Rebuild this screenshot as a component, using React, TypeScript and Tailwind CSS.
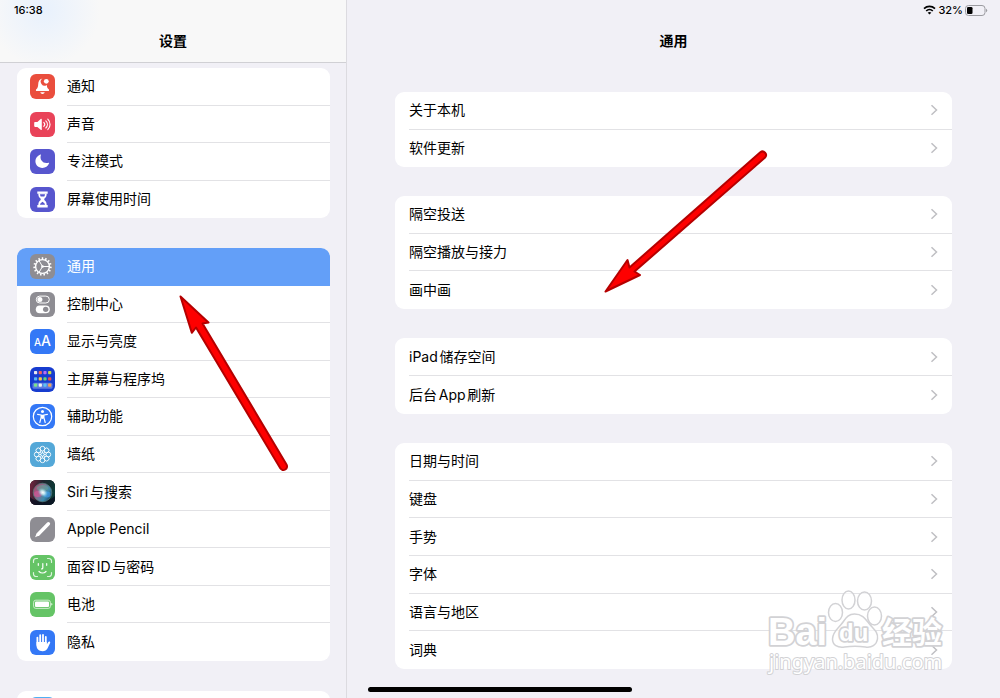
import type { ReactNode } from "react";

type Item = { label: string; tile: string; icon: ReactNode };

const PETALS = [0, 45, 90, 135, 180, 225, 270, 315];
const TEETH = [0, 24, 48, 72, 96, 120, 144, 168, 192, 216, 240, 264, 288, 312, 336];

const APP_DOTS = [
  ["#e8e8ee", "#f2605c", "#b66ef0", "#c5dc4a"],
  ["#55b6f5", "#f5c945", "#5fd47c", "#f0524c"],
  ["#7be389", "#f4f4f8", "#5cc4f2", "#f0a45c"],
];

const bell = (
  <>
    <path
      fill="#fff"
      d="M12.4 4.6c-3 .6-4.1 2.9-4.2 5.6-.1 2.700-.6 3.900-1.900 5-.7.700-.5 1.900.6 1.900h11.200c1.100 0 1.300-1.200.6-1.900-1.200-1-1.700-2-1.900-4.300A3.600 3.600 0 0 1 12.400 4.600Z"
    />
    <circle cx="16.3" cy="7.300" r="2.400" fill="#fff" />
    <path fill="#fff" d="M10.300 18.300h4.400c-.3 1-1.200 1.700-2.200 1.700s-1.900-.7-2.200-1.700Z" />
  </>
);

const speaker = (
  <>
    <path fill="#fff" d="M4.200 10.700c0-.5.300-.8.800-.8h2.400l3.300-2.900c.5-.4 1.100-.2 1.100.4v10c0 .7-.6.900-1.100.4l-3.300-2.900H5c-.5 0-.8-.3-.8-.8v-3.400Z" />
    <g fill="none" stroke="#fff" strokeWidth="1.1" strokeLinecap="round">
      <path d="M13.800 10.400c1.100 1.100 1.100 2.900 0 4" />
      <path d="M15.800 8.800c2.100 2.100 2.100 5.100 0 7.200" />
      <path d="M17.800 7.200c3 3 3 7.400 0 10.400" />
    </g>
  </>
);

const moon = (
  <path
    fill="#fff"
    d="M10.300 5.500c.5-.3.800 0 .6.500-1.700 5 2.600 9.300 7.600 7.700.5-.2.800.1.600.6-1.100 2.800-3.700 4.700-6.700 4.700-4.100 0-7-3-7-6.900 0-2.900 1.900-5.400 4.900-6.600Z"
  />
);

const hourglass = (
  <>
    <path fill="#fff" d="M7.300 4.400h10.400v2.300H7.300zM7.300 18.100h10.400v2.300H7.300z" />
    <path
      fill="#fff"
      d="M8.300 6.500h8.400c0 2.700-.8 4-2.400 5.200v1.400c1.600 1.200 2.400 2.500 2.400 5.200H8.300c0-2.700.8-4 2.400-5.200v-1.400C9.100 10.500 8.300 9.200 8.300 6.500Z"
    />
    <path fill="#5756ce" d="M10 7.200h5c-.1 1-.3 1.600-.7 2.200h-3.600c-.4-.6-.6-1.200-.7-2.200ZM10 17.700c.2-1.500 1.300-2 2.500-3 1.200 1 2.300 1.500 2.500 3z" />
  </>
);

const gear = (
  <>
    <g stroke="#fff" strokeWidth="1.500">
      {TEETH.map((deg) => (
        <path key={deg} d="M12.500 3.300v2.200" transform={`rotate(${deg} 12.500 12.500)`} />
      ))}
    </g>
    <circle cx="12.5" cy="12.5" r="6.900" fill="none" stroke="#fff" strokeWidth="1.4" />
    <path d="M12.500 12.500h6.500M12.500 12.500 9.200 6.900M12.500 12.500l-3.300 5.600" stroke="#fff" />
    <circle cx="12.5" cy="12.5" r="1.3" fill="#fff" />
  </>
);

const toggles = (
  <>
    <rect x="6.3" y="4.1" width="13" height="6.9" rx="3.45" fill="none" stroke="#fff" />
    <circle cx="9.9" cy="7.55" r="2.5" fill="#fff" />
    <rect x="5.8" y="13.4" width="14" height="7.9" rx="3.95" fill="#fff" />
    <circle cx="15.7" cy="17.35" r="2.7" fill="#8e8d93" />
  </>
);

const letters = (
  <g fill="#fff" fontFamily="Inter, sans-serif" fontWeight="500">
    <text x="4" y="17" fontSize="10">A</text>
    <text x="11" y="17" fontSize="14">A</text>
  </g>
);

const homeScreen = (
  <>
    <rect x="2.5" y="15.8" width="20" height="6" rx="1.5" fill="#5e7ce0" />
    {APP_DOTS.map((row, y) =>
      row.map((color, x) => (
        <rect key={`${x}-${y}`} x={4 + x * 4.7} y={4 + y * 6.3} width="3.2" height="3.2" rx="0.8" fill={color} />
      )),
    )}
  </>
);

const accessibility = (
  <>
    <circle cx="12.5" cy="12.5" r="9.2" fill="none" stroke="#fff" strokeWidth="1.2" />
    <circle cx="12.5" cy="7.6" r="1.5" fill="#fff" />
    <path
      d="M7.600 10.300l3.500.7v2.700l-1.300 4.800M17.400 10.300l-3.500.7v2.700l1.300 4.800"
      fill="none"
      stroke="#fff"
      strokeWidth="1.2"
      strokeLinecap="round"
      strokeLinejoin="round"
    />
    <path fill="#fff" d="M11 10.700h3v3.600l-1.500.8-1.500-.8z" />
  </>
);

const flower = (
  <g fill="none" stroke="#fff" strokeWidth="0.9">
    {PETALS.map((deg) => (
      <g key={deg} transform={`rotate(${deg} 12.500 12.500)`}>
        <circle cx="12.5" cy="6.7" r="2.4" />
        <path d="M12.500 9.300v1.600" />
      </g>
    ))}
    <circle cx="12.5" cy="12.5" r="1.7" />
  </g>
);

const siri = (
  <>
    <defs>
      <linearGradient id="siri-bg" x1="0" y1="0" x2="1" y2="0.2">
        <stop offset="0" stopColor="#7c2440" />
        <stop offset="0.5" stopColor="#20242f" />
        <stop offset="1" stopColor="#0c3a36" />
      </linearGradient>
      <linearGradient id="siri-orb" x1="0" y1="0.2" x2="1" y2="0.8">
        <stop offset="0" stopColor="#b8406c" />
        <stop offset="0.4" stopColor="#80708e" />
        <stop offset="0.7" stopColor="#3d8cae" />
        <stop offset="1" stopColor="#1c3c64" />
      </linearGradient>
      <radialGradient id="siri-glow">
        <stop offset="0" stopColor="#fff" />
        <stop offset="0.4" stopColor="#d4f4f8" stopOpacity="0.8" />
        <stop offset="1" stopColor="#76c8d8" stopOpacity="0" />
      </radialGradient>
    </defs>
    <rect width="25" height="25" fill="url(#siri-bg)" />
    <path d="M0 17c6 6 18 6 25-1v9H0z" fill="#0b0f20" opacity="0.8" />
    <circle cx="12.5" cy="12.5" r="9.3" fill="url(#siri-orb)" stroke="#57817f" strokeWidth="0.7" />
    <ellipse cx="12.5" cy="8" rx="6" ry="3" fill="#5fae9c" opacity="0.5" />
    <ellipse cx="8" cy="14" rx="4" ry="3" fill="#e0539a" opacity="0.6" />
    <ellipse cx="17" cy="14.5" rx="3.5" ry="3" fill="#429bea" opacity="0.7" />
    <ellipse cx="12.8" cy="12.3" rx="5.5" ry="4.2" fill="url(#siri-glow)" transform="rotate(35 12.500 12.500)" />
  </>
);

const pencil = (
  <>
    <path d="M8.200 17.200 18.400 6.800" stroke="#fff" strokeWidth="3.4" strokeLinecap="round" />
    <path fill="#fff" d="M6.800 16.200 5 20.200l4.200-1.700z" />
  </>
);

const faceId = (
  <g fill="none" stroke="#fff" strokeWidth="1.2" strokeLinecap="round">
    <path
      stroke="#dcf3dc"
      d="M3.500 7.500V6A2.500 2.500 0 0 1 6 3.500h1.500M17.500 3.500H19A2.500 2.500 0 0 1 21.500 6v1.500M21.500 17.500V19a2.500 2.500 0 0 1-2.500 2.500h-1.500M7.500 21.500H6A2.500 2.500 0 0 1 3.500 19v-1.500"
    />
    <path d="M8.300 8.600v1.700M16.700 8.600v1.700M12.800 8.600v4.300c0 .7-.4 1-1.200 1M9 16.500c2 2 5 2 7 0" />
  </g>
);

const batteryFull = (
  <>
    <rect x="3.6" y="8.2" width="16.800" height="8.2" rx="2.2" fill="none" stroke="#d8f1d7" strokeWidth="0.9" />
    <rect x="5" y="9.6" width="14" height="5.4" rx="1" fill="#fff" />
    <path fill="#fff" d="M21.400 11v2.600c.7-.2 1-.7 1-1.300s-.3-1.100-1-1.300Z" />
  </>
);

const hand = (
  <>
    <g stroke="#fff" strokeWidth="1.8" strokeLinecap="round">
      <path d="M7.400 7.600V15M10.200 5.200V15M13 5V15M15.800 7V15" />
    </g>
    <path
      fill="#fff"
      d="M6.500 12h10.200v2.500l1.400-2.200c.4-.7 1.100-1 1.700-.7.500.3.600.9.300 1.500l-2.500 5.200c-1 1.900-2.700 2.900-5.100 2.900-3.700 0-6-2.300-6-5.900z"
    />
  </>
);

const TOP_ITEMS: Item[] = [
  { label: "通知", tile: "bg-[#ea4e3d]", icon: bell },
  { label: "声音", tile: "bg-[#e94359]", icon: speaker },
  { label: "专注模式", tile: "bg-[#5756ce]", icon: moon },
  { label: "屏幕使用时间", tile: "bg-[#5756ce]", icon: hourglass },
];

const MAIN_ITEMS: Item[] = [
  { label: "通用", tile: "bg-[#8e8d93]", icon: gear },
  { label: "控制中心", tile: "bg-[#8e8d93]", icon: toggles },
  { label: "显示与亮度", tile: "bg-[#3478f6]", icon: letters },
  { label: "主屏幕与程序坞", tile: "bg-[#173ccf]", icon: homeScreen },
  { label: "辅助功能", tile: "bg-[#3478f6]", icon: accessibility },
  { label: "墙纸", tile: "bg-[#54a8d8]", icon: flower },
  { label: "Siri与搜索", tile: "bg-black", icon: siri },
  { label: "Apple Pencil", tile: "bg-[#8e8d93]", icon: pencil },
  { label: "面容ID与密码", tile: "bg-[#65c466]", icon: faceId },
  { label: "电池", tile: "bg-[#65c466]", icon: batteryFull },
  { label: "隐私", tile: "bg-[#3478f6]", icon: hand },
];

const GENERAL_GROUPS = [
  { height: "min-h-[75px]", rows: ["关于本机", "软件更新"] },
  { height: "min-h-[113px]", rows: ["隔空投送", "隔空播放与接力", "画中画"] },
  { height: "min-h-[76px]", rows: ["iPad储存空间", "后台App刷新"] },
  { height: "min-h-[226px]", rows: ["日期与时间", "键盘", "手势", "字体", "语言与地区", "词典"] },
];

function Tile({ color, children }: { color: string; children?: ReactNode }) {
  return (
    <span className={`size-[25px] shrink-0 overflow-hidden rounded-[6px] ${color}`}>
      <svg viewBox="0 0 25 25" className="size-full" aria-hidden="true">
        {children}
      </svg>
    </span>
  );
}

function SidebarGroup({ items, height, selected }: { items: Item[]; height: string; selected?: string }) {
  return (
    <ul className={`grid auto-rows-fr overflow-hidden rounded-[9px] bg-white ${height}`}>
      {items.map((item, i) => {
        const active = item.label === selected;
        const line = i < items.length - 1 && !active;
        return (
          <li key={item.label} className="grid">
            <a
              href="#"
              aria-current={active ? "page" : undefined}
              className={`flex items-center gap-3 pl-[13px] ${active ? "bg-[#639ff8] text-white" : ""}`}
            >
              <Tile color={item.tile}>{item.icon}</Tile>
              <span className={`flex flex-1 items-center self-stretch border-b ${line ? "border-[#e2e2e5]" : "border-transparent"}`}>
                {item.label}
              </span>
            </a>
          </li>
        );
      })}
    </ul>
  );
}

function Chevron() {
  return (
    <svg viewBox="0 0 8 12" className="h-3 w-2" fill="none" stroke="#bfbfc3" strokeWidth="1.5" aria-hidden="true">
      <path d="M1.500 1.200 6.500 6l-5 4.800" />
    </svg>
  );
}

function StatusIcons() {
  return (
    <div className="flex items-center justify-end gap-[2px] pr-3 text-[11px] leading-5 font-medium">
      <svg viewBox="0 0 13 10" className="h-[10px] w-[13px]" aria-hidden="true">
        <g fill="none" stroke="#000" strokeWidth="1.7">
          <path d="M1 3.700c3.200-3 7.800-3 11 0" />
          <path d="M3.200 6c1.900-1.800 4.700-1.800 6.600 0" />
        </g>
        <path d="M4.700 7.700c1-1 2.600-1 3.600 0L6.500 9.600z" />
      </svg>
      <span>32%</span>
      <svg viewBox="0 0 23 11" className="h-[11px] w-[23px]" aria-hidden="true">
        <rect x="0.5" y="0.5" width="19.5" height="10" rx="3" fill="none" stroke="#9b9ba0" />
        <rect x="2" y="2" width="5.5" height="7" rx="1.3" />
        <path d="M21 3.800v3.400c.8-.3 1.200-.9 1.200-1.700s-.4-1.400-1.200-1.700Z" fill="#9b9ba0" />
      </svg>
    </div>
  );
}

function Watermark() {
  return (
    <svg
      viewBox="0 0 184 90"
      className="pointer-events-none absolute right-[52px] bottom-[20px] h-[90px] w-[184px]"
      fill="#fff"
      stroke="#d2d2d5"
      strokeLinejoin="round"
    >
      <g strokeWidth="1.5" fillOpacity="0.6">
        <ellipse cx="71.5" cy="24.500" rx="7" ry="9" />
        <ellipse cx="84.5" cy="12" rx="6.5" ry="9" />
        <ellipse cx="100.5" cy="13" rx="7" ry="9" />
        <ellipse cx="110.5" cy="28" rx="7" ry="9" />
        <path d="M90.500 26c8 0 11 5 15 10s9 8 8 15c-1 6-6 9-12 8-7-1-14-1-21 0-7 1-12-2-12-8 0-7 5-10 9-15s6-10 13-10Z" />
      </g>
      <g strokeWidth="3.5" paintOrder="stroke" fontFamily="'Liberation Sans', 'Noto Sans CJK SC', sans-serif" fontWeight="700">
        <text x="4" y="57" fontSize="38">Bai</text>
        <text x="75" y="53" fontSize="24">du</text>
        <text x="118" y="55" fontSize="30">经验</text>
      </g>
      <text x="5" y="81" fontSize="20" strokeWidth="2" paintOrder="stroke" fontFamily="'Noto Sans', sans-serif">
        jingyan.baidu.com
      </text>
    </svg>
  );
}

export default function App() {
  return (
    <div className="relative flex h-screen overflow-hidden bg-[#f1f0f6] font-[Inter,'Noto_Sans_CJK_SC',sans-serif] text-sm text-black [text-autospace:normal]">
      <aside className="w-[346px] shrink-0">
        <header className="h-[63px] border-b border-[#d0d0d4] bg-[#f8f8f8] bg-[radial-gradient(circle_at_44px_10px,#e8f1fd_0,#f8f8f8_56px)]">
          <p className="pl-[14px] text-[11px] leading-5 font-medium">16:38</p>
          <h1 className="pt-[11px] text-center leading-5 font-bold">设置</h1>
        </header>
        <nav className="flex flex-col gap-[30px] pt-[5px] pr-4 pl-[17px]">
          <SidebarGroup items={TOP_ITEMS} height="min-h-[150px]" />
          <SidebarGroup items={MAIN_ITEMS} height="min-h-[413px]" selected="通用" />
          <div className="rounded-[9px] bg-white py-[6px] pl-[13px]">
            <Tile color="block bg-[#4fb0f4]" />
          </div>
        </nav>
      </aside>

      <main className="flex-1 border-l border-[#dcdbe0]">
        <StatusIcons />
        <h2 className="pt-[11px] text-center leading-5 font-bold">通用</h2>
        <div className="flex flex-col gap-[29px] pt-[41px] pr-12 pl-12">
          {GENERAL_GROUPS.map((group) => (
            <ul key={group.rows[0]} className={`grid auto-rows-fr rounded-[9px] bg-white pl-[14px] ${group.height}`}>
              {group.rows.map((row) => (
                <li key={row} className="grid border-b border-[#e2e2e5] last:border-transparent">
                  <a href="#" className="flex items-center justify-between pr-[14px]">
                    {row}
                    <Chevron />
                  </a>
                </li>
              ))}
            </ul>
          ))}
        </div>
      </main>

      <svg viewBox="0 0 115 180" className="pointer-events-none absolute top-[293px] left-[176px] h-[180px] w-[115px]" aria-hidden="true">
        <path
          d="M4.500 3.500 32.500 29.500 26.500 30.500 110.500 171.500a3.600 3.600 0 0 1-6.200 3.800L20 34.500l-4.200 5.300Z"
          fill="#fe0000"
          stroke="#b50000"
          strokeWidth="2"
          strokeLinejoin="round"
        />
      </svg>
      <svg viewBox="0 0 170 150" className="pointer-events-none absolute top-[148px] left-[601px] h-[150px] w-[170px]" aria-hidden="true">
        <path
          d="M4.500 143.500 26.500 112 28.500 119.500 159.300 4.200a3.600 3.600 0 0 1 4.800 5.300L33.500 123.500 39 127Z"
          fill="#fe0000"
          stroke="#b50000"
          strokeWidth="2"
          strokeLinejoin="round"
        />
      </svg>

      <Watermark />
      <div className="absolute bottom-[6px] left-1/2 h-[5px] w-[264px] -translate-x-1/2 rounded-full bg-black" />
    </div>
  );
}
